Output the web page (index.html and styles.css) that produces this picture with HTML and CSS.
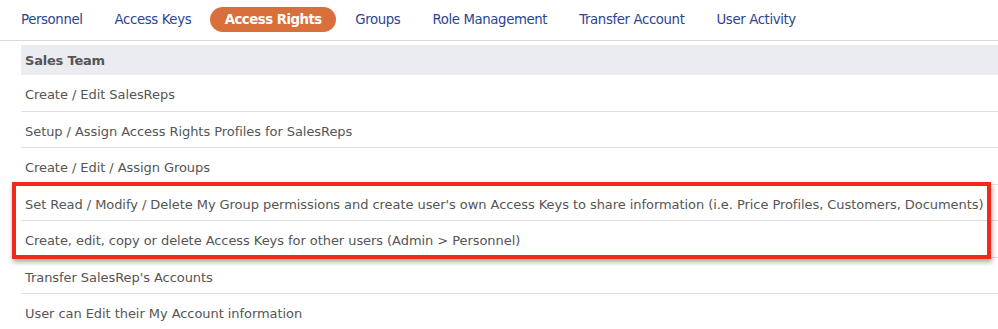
FILE: index.html
```html
<!DOCTYPE html>
<html>
<head>
<meta charset="utf-8">
<link rel="stylesheet" href="styles.css">
</head>
<body>
<nav class="tabs">
  <a class="tab">Personnel</a>
  <a class="tab">Access Keys</a>
  <a class="tab active">Access Rights</a>
  <a class="tab">Groups</a>
  <a class="tab">Role Management</a>
  <a class="tab">Transfer Account</a>
  <a class="tab">User Activity</a>
</nav>
<div class="content">
  <div class="list">
    <div class="head">Sales Team</div>
    <div class="row">Create / Edit SalesReps</div>
    <div class="row">Setup / Assign Access Rights Profiles for SalesReps</div>
    <div class="row">Create / Edit / Assign Groups</div>
    <div class="row">Set Read / Modify / Delete My Group permissions and create user's own Access Keys to share information (i.e. Price Profiles, Customers, Documents)</div>
    <div class="row">Create, edit, copy or delete Access Keys for other users (Admin &gt; Personnel)</div>
    <div class="row">Transfer SalesRep's Accounts</div>
    <div class="row">User can Edit their My Account information</div>
  </div>
  <div class="highlight"></div>
</div>
</body>
</html>
```
FILE: styles.css
```css
html, body {
  margin: 0;
  padding: 0;
  background: #fff;
  overflow: hidden;
}
body {
  font-family: "DejaVu Sans", Verdana, sans-serif;
  font-size: 13px;
  letter-spacing: -0.06px;
  color: #555;
}
.tabs {
  display: flex;
  align-items: center;
  gap: 32px;
  height: 39px;
  padding: 0 0 1px 21px;
  border-bottom: 1px solid #dadada;
  box-sizing: content-box;
}
.tab {
  color: #2b4593;
  font-size: 13.3px;
  letter-spacing: -0.38px;
  white-space: nowrap;
  line-height: 25px;
}
.tab.active {
  background: #d9703b;
  color: #fff;
  font-weight: bold;
  letter-spacing: -0.5px;
  border-radius: 13px;
  padding: 0 14.5px;
  margin: 0 -13px;
}
.content {
  position: relative;
  padding: 4px 0 0 21px;
}
.list {
  display: flex;
  flex-direction: column;
}
.head {
  background: #ebecf1;
  height: 29px;
  line-height: 29px;
  padding: 1px 0 0 4px;
  font-weight: bold;
  letter-spacing: -0.2px;
  color: #555;
}
.row {
  height: 31.5px;
  line-height: 31.5px;
  padding: 4px 0 0 4px;
  border-bottom: 1px solid #e0e0e0;
  white-space: nowrap;
}
.highlight {
  position: absolute;
  left: 12px;
  top: 141px;
  width: 971px;
  height: 69px;
  border: 4px solid #f4271b;
  box-shadow: 1px 3px 5px rgba(0,0,0,0.35);
}
```
